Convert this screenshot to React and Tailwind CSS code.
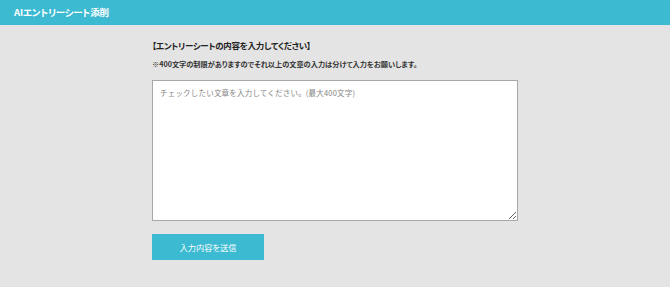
export default function App() {
  const jp = { fontFamily: '"Noto Sans CJK JP", "Noto Sans", sans-serif', fontFeatureSettings: '"palt"' };

  return (
    <div className="min-h-[287px] bg-[#e4e4e4]" style={jp}>
      <header className="flex h-[25px] items-center bg-[#3bbad1] px-[14px]">
        <h1 className="text-[9.5px] font-bold leading-none tracking-[-0.2px] text-white">AIエントリーシート添削</h1>
      </header>

      <main className="mx-auto w-[366px] pt-[14px]">
        <h2 className="text-[8.5px] font-bold leading-[12px] tracking-[-0.3px] text-[#222]">【エントリーシートの内容を入力してください】</h2>
        <p className="mt-[7px] text-[7.2px] font-bold leading-[12px] text-[#333]">
          ※400文字の制限がありますのでそれ以上の文章の入力は分けて入力をお願いします。
        </p>

        <textarea
          placeholder="チェックしたい文章を入力してください。(最大400文字)"
          className="mt-[10px] block h-[141px] w-[366px] resize border border-[#a8a8a8] bg-white px-[7px] py-[6px] text-[7.5px] leading-[12px] tracking-[0.2px] text-[#333] outline-none placeholder:text-[#858585]"
          style={{ fontFeatureSettings: 'normal' }}
        />

        <button
          type="button"
          className="mt-[13px] flex h-[26px] w-[112px] items-center justify-center bg-[#3bbad1] text-[8.2px] leading-none text-white"
        >
          入力内容を送信
        </button>
      </main>
    </div>
  );
}
